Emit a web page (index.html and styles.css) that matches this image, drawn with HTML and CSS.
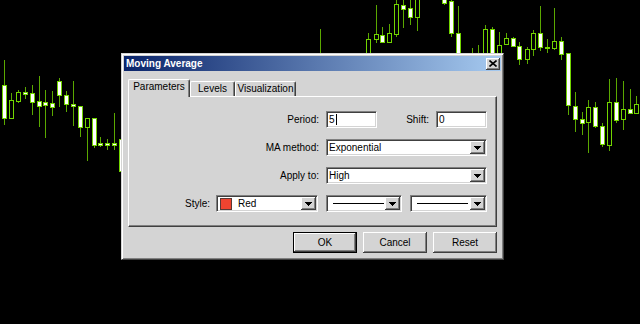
FILE: index.html
```html
<!DOCTYPE html>
<html lang="en">

<head>
    <meta charset="UTF-8">
    <meta name="viewport" content="width=device-width, initial-scale=1.0">
    <title>Moving Average</title>
    <link rel="stylesheet" href="styles.css">
</head>

<body>
    <svg class="chart" id="chart" width="640" height="324"></svg>

    <div class="dialog">
        <div class="titlebar">
            <span class="title">Moving Average</span>
            <div class="close">
                <svg width="8" height="7" viewBox="0 0 8 7">
                    <path d="M0.5 0.5 L7.5 6.5 M7.5 0.5 L0.5 6.5" />
                </svg>
            </div>
        </div>
        <div class="dialog-body">
            <div class="tabs">
                <div class="tab tab-params active">Parameters</div>
                <div class="tab tab-levels">Levels</div>
                <div class="tab tab-visual">Visualization</div>
            </div>
            <div class="panel">
                <div class="row">
                    <span class="label">Period:</span>
                    <div class="field short">5<span class="caret"></span></div>
                    <span class="label shift">Shift:</span>
                    <div class="field short">0</div>
                </div>
                <div class="row">
                    <span class="label">MA method:</span>
                    <div class="field select wide">
                        <span class="value">Exponential</span>
                        <span class="arrow"><svg width="7" height="4" viewBox="0 0 7 4"><polygon points="0,0 7,0 3.5,4" /></svg></span>
                    </div>
                </div>
                <div class="row">
                    <span class="label">Apply to:</span>
                    <div class="field select wide">
                        <span class="value">High</span>
                        <span class="arrow"><svg width="7" height="4" viewBox="0 0 7 4"><polygon points="0,0 7,0 3.5,4" /></svg></span>
                    </div>
                </div>
                <div class="row style-row">
                    <span class="label">Style:</span>
                    <div class="field select color-pick">
                        <span class="swatch"></span>
                        <span class="value">Red</span>
                        <span class="arrow"><svg width="7" height="4" viewBox="0 0 7 4"><polygon points="0,0 7,0 3.5,4" /></svg></span>
                    </div>
                    <div class="field select line-pick first">
                        <span class="value"><span class="line"></span></span>
                        <span class="arrow"><svg width="7" height="4" viewBox="0 0 7 4"><polygon points="0,0 7,0 3.5,4" /></svg></span>
                    </div>
                    <div class="field select line-pick">
                        <span class="value"><span class="line"></span></span>
                        <span class="arrow"><svg width="7" height="4" viewBox="0 0 7 4"><polygon points="0,0 7,0 3.5,4" /></svg></span>
                    </div>
                </div>
            </div>
            <div class="buttons">
                <div class="btn default">OK</div>
                <div class="btn">Cancel</div>
                <div class="btn">Reset</div>
            </div>
        </div>
    </div>

    <script>
        // x, high, low, body top, body bottom, bullish
        let candles = [
            [4, 60, 125, 85, 118, 1], [11, 93, 118, 100, 118, 0], [18, 90, 103, 92, 101, 0],
            [25, 87, 99, 92, 94, 1], [32, 85, 115, 93, 102, 1], [39, 76, 127, 101, 106, 1],
            [45, 90, 138, 102, 105, 1], [52, 91, 116, 103, 107, 1], [59, 78, 107, 81, 95, 1],
            [66, 91, 112, 95, 104, 1], [73, 81, 126, 104, 106, 1], [80, 106, 137, 106, 127, 1],
            [87, 118, 161, 118, 127, 0], [94, 118, 148, 118, 145, 1], [100, 137, 147, 143, 145, 1],
            [107, 139, 150, 143, 145, 1], [114, 113, 150, 143, 145, 1], [121, 135, 180, 139, 171, 1],
            [320, 29, 80, 60, 70, 1], [368, 33, 80, 39, 70, 0], [376, 5, 43, 34, 39, 0],
            [382, 27, 43, 35, 42, 1], [389, 24, 42, 33, 42, 0], [396, -5, 37, 4, 34, 0],
            [403, -5, 28, 5, 9, 1], [410, -5, 25, 8, 17, 1], [417, -5, 31, -5, 17, 0],
            [444, -5, 5, -5, 3, 1], [451, -5, 37, 1, 33, 1], [458, 6, 80, 33, 70, 1],
            [472, 48, 80, 60, 70, 1], [478, 45, 80, 60, 70, 1], [485, 25, 80, 29, 70, 0],
            [492, 27, 80, 29, 70, 1], [499, 32, 80, 45, 70, 0],
            [506, 33, 45, 38, 44, 0], [513, 37, 47, 38, 46, 1], [519, 42, 65, 46, 59, 1],
            [527, 47, 64, 49, 59, 0], [533, 30, 56, 33, 49, 0], [540, 6, 51, 33, 47, 1],
            [547, 39, 53, 47, 48, 1], [554, 8, 50, 41, 48, 0], [561, 37, 60, 41, 54, 1],
            [568, 53, 115, 53, 105, 1], [575, 92, 132, 106, 119, 1], [582, 112, 135, 119, 123, 1],
            [588, 100, 153, 107, 122, 0], [595, 102, 128, 107, 126, 1], [602, 123, 147, 126, 144, 1],
            [609, 79, 151, 102, 145, 0], [616, 78, 123, 102, 120, 1], [623, 81, 130, 109, 119, 0],
            [630, 89, 114, 109, 113, 1], [636, 96, 114, 104, 113, 0]
        ];
        let chart = document.getElementById('chart');
        let out = '';
        candles.forEach(c => {
            let [x, hi, lo, top, bot, up] = c;
            out += '<line class="wick" x1="' + (x + 0.5) + '" y1="' + hi + '" x2="' + (x + 0.5) + '" y2="' + lo + '"/>';
            out += '<rect class="' + (up ? 'up' : 'down') + '" x="' + (x - 1.5) + '" y="' + (top + 0.5) +
                '" width="4" height="' + Math.max(bot - top, 1) + '"/>';
        });
        chart.innerHTML = out;
    </script>
</body>

</html>
```

FILE: styles.css
```css
* {
    margin: 0;
    padding: 0;
    box-sizing: border-box;
}

body {
    width: 640px;
    height: 324px;
    background-color: #000;
    overflow: hidden;
    position: relative;
    font-family: "Liberation Sans", Arial, sans-serif;
    font-size: 10px;
    color: #000;
}

.chart {
    display: block;
    shape-rendering: crispEdges;
}

.chart .wick {
    stroke: #5aa800;
    stroke-width: 1;
}

.chart .up {
    fill: #fff;
    stroke: #72d400;
}

.chart .down {
    fill: #000;
    stroke: #72d400;
}

/* window */
.dialog {
    position: absolute;
    left: 121px;
    top: 53px;
    width: 383px;
    height: 207px;
    background-color: #d4d4d4;
    border: 1px solid;
    border-color: #d4d4d4 #404040 #404040 #d4d4d4;
    box-shadow: inset 1px 1px #fff, inset -1px -1px #808080;
    padding: 2px;
}

.titlebar {
    height: 15px;
    display: flex;
    align-items: center;
    justify-content: space-between;
    padding: 0 1px 0 2px;
    background: linear-gradient(to right, #0a246a, #a6caf0);
}

.title {
    color: #fff;
    font-weight: bold;
    font-size: 10px;
}

.close {
    width: 14px;
    height: 12px;
    display: flex;
    align-items: center;
    justify-content: center;
    background-color: #d4d4d4;
    box-shadow: inset -1px -1px #404040, inset 1px 1px #fff, inset -2px -2px #808080;
}

.close svg path {
    stroke: #000;
    stroke-width: 1.6;
    fill: none;
}

.dialog-body {
    padding: 8px 4px 0 4px;
}

/* tabs */
.tabs {
    display: flex;
    align-items: flex-end;
    height: 17px;
}

.tab {
    height: 15px;
    text-align: center;
    line-height: 13px;
    border-top: 1px solid #fff;
    border-left: 1px solid #fff;
    border-right: 1px solid #404040;
    border-radius: 2px 2px 0 0;
    box-shadow: inset -1px 0 #808080;
    background-color: #d4d4d4;
}

.tab.active {
    height: 18px;
    margin-bottom: -1px;
    position: relative;
    z-index: 1;
    line-height: 14px;
}

.tab-params {
    width: 62px;
}

.tab-levels {
    width: 45px;
}

.tab-visual {
    width: 61px;
}

.panel {
    height: 131px;
    border-top: 1px solid #fff;
    border-left: 1px solid #fff;
    border-right: 1px solid #404040;
    border-bottom: 1px solid #404040;
    box-shadow: inset -1px -1px #808080;
    padding: 14px 9px 0 0;
    display: flex;
    flex-direction: column;
    gap: 11px;
}

.row {
    height: 17px;
    display: flex;
    align-items: center;
    justify-content: flex-end;
}

.label {
    margin-right: 7px;
}

.label.shift {
    width: 59px;
    text-align: right;
    margin-right: 0;
    padding-right: 7px;
}

.style-row .label {
    margin-right: 6px;
}

/* inputs */
.field {
    height: 17px;
    display: flex;
    align-items: center;
    background-color: #fff;
    border: 1px solid;
    border-color: #808080 #fff #fff #808080;
    box-shadow: inset 1px 1px #404040, inset -1px -1px #d4d4d4;
    padding: 1px 1px 1px 2px;
}

.field.short {
    width: 51px;
}

.field.wide {
    width: 161px;
}

.caret {
    width: 1px;
    height: 11px;
    margin-left: 1px;
    background-color: #000;
}

.select .value {
    flex: 1;
    display: flex;
    align-items: center;
}

.arrow {
    width: 15px;
    height: 13px;
    display: flex;
    align-items: center;
    justify-content: center;
    background-color: #d4d4d4;
    box-shadow: inset -1px -1px #404040, inset 1px 1px #fff, inset -2px -2px #808080;
}

.arrow svg {
    display: block;
    shape-rendering: crispEdges;
}

.color-pick {
    width: 102px;
}

.swatch {
    width: 12px;
    height: 12px;
    margin: 0 6px 0 1px;
    border: 1px solid #5a3a36;
    background-color: #ee4430;
}

.line-pick {
    width: 77px;
    margin-left: 8px;
}

.line-pick.first {
    width: 76px;
}

.line-pick .line {
    width: 51px;
    height: 1px;
    margin-left: 4px;
    background-color: #000;
}

/* buttons */
.buttons {
    display: flex;
    justify-content: flex-end;
    gap: 6px;
    margin-top: 5px;
}

.btn {
    width: 64px;
    height: 21px;
    display: flex;
    align-items: center;
    justify-content: center;
    background-color: #d4d4d4;
    box-shadow: inset -1px -1px #404040, inset 1px 1px #fff, inset -2px -2px #808080;
}

.btn.default {
    border: 1px solid #000;
    box-shadow: inset -1px -1px #404040, inset 1px 1px #fff, inset -2px -2px #808080;
}
```
